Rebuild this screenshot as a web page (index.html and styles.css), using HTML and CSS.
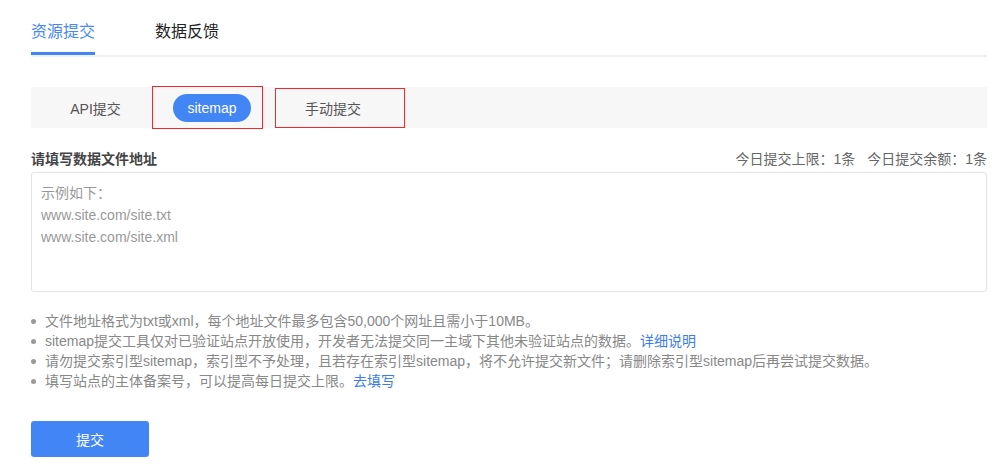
FILE: index.html
```html
<!DOCTYPE html>
<html lang="zh-CN">
<head>
	<meta charset="utf-8">
	<title>资源提交</title>
	<link rel="stylesheet" href="styles.css">
</head>
<body>
	<div class="page">
		<div class="tabs">
			<a class="tab active" href="#">资源提交</a>
			<a class="tab" href="#">数据反馈</a>
		</div>

		<div class="subtabs">
			<div class="subtab first">API提交</div>
			<div class="subtab marked"><span class="pill">sitemap</span></div>
			<div class="subtab marked wide">手动提交</div>
		</div>

		<div class="field-head">
			<span class="field-label">请填写数据文件地址</span>
			<span class="quota">今日提交上限：1条<span class="gap"></span>今日提交余额：1条</span>
		</div>
		<textarea class="urls" placeholder="示例如下：&#10;www.site.com/site.txt&#10;www.site.com/site.xml"></textarea>

		<ul class="notes">
			<li>文件地址格式为txt或xml，每个地址文件最多包含50,000个网址且需小于10MB。</li>
			<li>sitemap提交工具仅对已验证站点开放使用，开发者无法提交同一主域下其他未验证站点的数据。<a href="#">详细说明</a></li>
			<li>请勿提交索引型sitemap，索引型不予处理，且若存在索引型sitemap，将不允许提交新文件；请删除索引型sitemap后再尝试提交数据。</li>
			<li>填写站点的主体备案号，可以提高每日提交上限。<a href="#">去填写</a></li>
		</ul>

		<button class="submit" type="button">提交</button>
	</div>
</body>
</html>
```

FILE: styles.css
```css
html {
	box-sizing: border-box;
}
*,
*::before,
*::after {
	box-sizing: inherit;
}

body {
	background-color: #fff;
	color: #333;
	font-family: "Liberation Sans", "Noto Sans CJK SC", sans-serif;
	font-size: 14px;
	margin: 0;
	padding: 0;
}

a {
	color: #3b7cf4;
	text-decoration: none;
}

.page {
	padding: 0 6px 0 31px;
}

.tabs {
	border-bottom: 2px solid #f0f0f0;
	display: flex;
	gap: 60px;
	height: 57px;
	padding-top: 20px;
}

.tab {
	color: #222;
	font-size: 16px;
	height: 35px;
	line-height: 24px;
}

.tab.active {
	border-bottom: 3px solid #4285f4;
	color: #4a87f5;
}

.subtabs {
	align-items: center;
	background-color: #f7f7f7;
	display: flex;
	height: 41px;
	margin-top: 30px;
}

.subtab {
	align-items: center;
	color: #555;
	display: flex;
	height: 41px;
	justify-content: center;
	width: 121px;
}

.subtab.first {
	padding-left: 8px;
}

.subtab.marked {
	border: 1px solid #f0282d;
	height: 43px;
	width: 111px;
}

.subtab.wide {
	height: 40px;
	justify-content: flex-start;
	margin-left: 12px;
	padding-left: 29px;
	width: 130px;
}

.pill {
	background-color: #4285f4;
	border-radius: 14px;
	color: #fff;
	height: 28px;
	line-height: 28px;
	margin-left: 9px;
	padding: 0 14px;
}

.field-head {
	align-items: baseline;
	display: flex;
	justify-content: space-between;
	margin-top: 20px;
}

.field-label {
	color: #444;
	font-size: 14px;
	font-weight: bold;
}

.quota {
	color: #666;
	font-size: 14px;
}

.gap {
	display: inline-block;
	width: 12px;
}

.urls {
	border: 1px solid #e2e2e2;
	border-radius: 3px;
	display: block;
	font-family: inherit;
	font-size: 14px;
	height: 120px;
	line-height: 22px;
	margin-top: 4px;
	outline: none;
	padding: 9px 9px;
	resize: none;
	width: 100%;
}

.urls::placeholder {
	color: #999;
}

.notes {
	color: #888;
	font-size: 14px;
	line-height: 20px;
	list-style: none;
	margin: 19px 0 0;
	padding: 0;
}

.notes li::before {
	background-color: #999;
	border-radius: 50%;
	content: "";
	display: inline-block;
	height: 5px;
	margin: 0 9px 2px 0;
	vertical-align: middle;
	width: 5px;
}

.submit {
	background-color: #4285f4;
	border: none;
	border-radius: 3px;
	color: #fff;
	font-family: inherit;
	font-size: 14px;
	height: 36px;
	margin-top: 30px;
	width: 118px;
}
```
